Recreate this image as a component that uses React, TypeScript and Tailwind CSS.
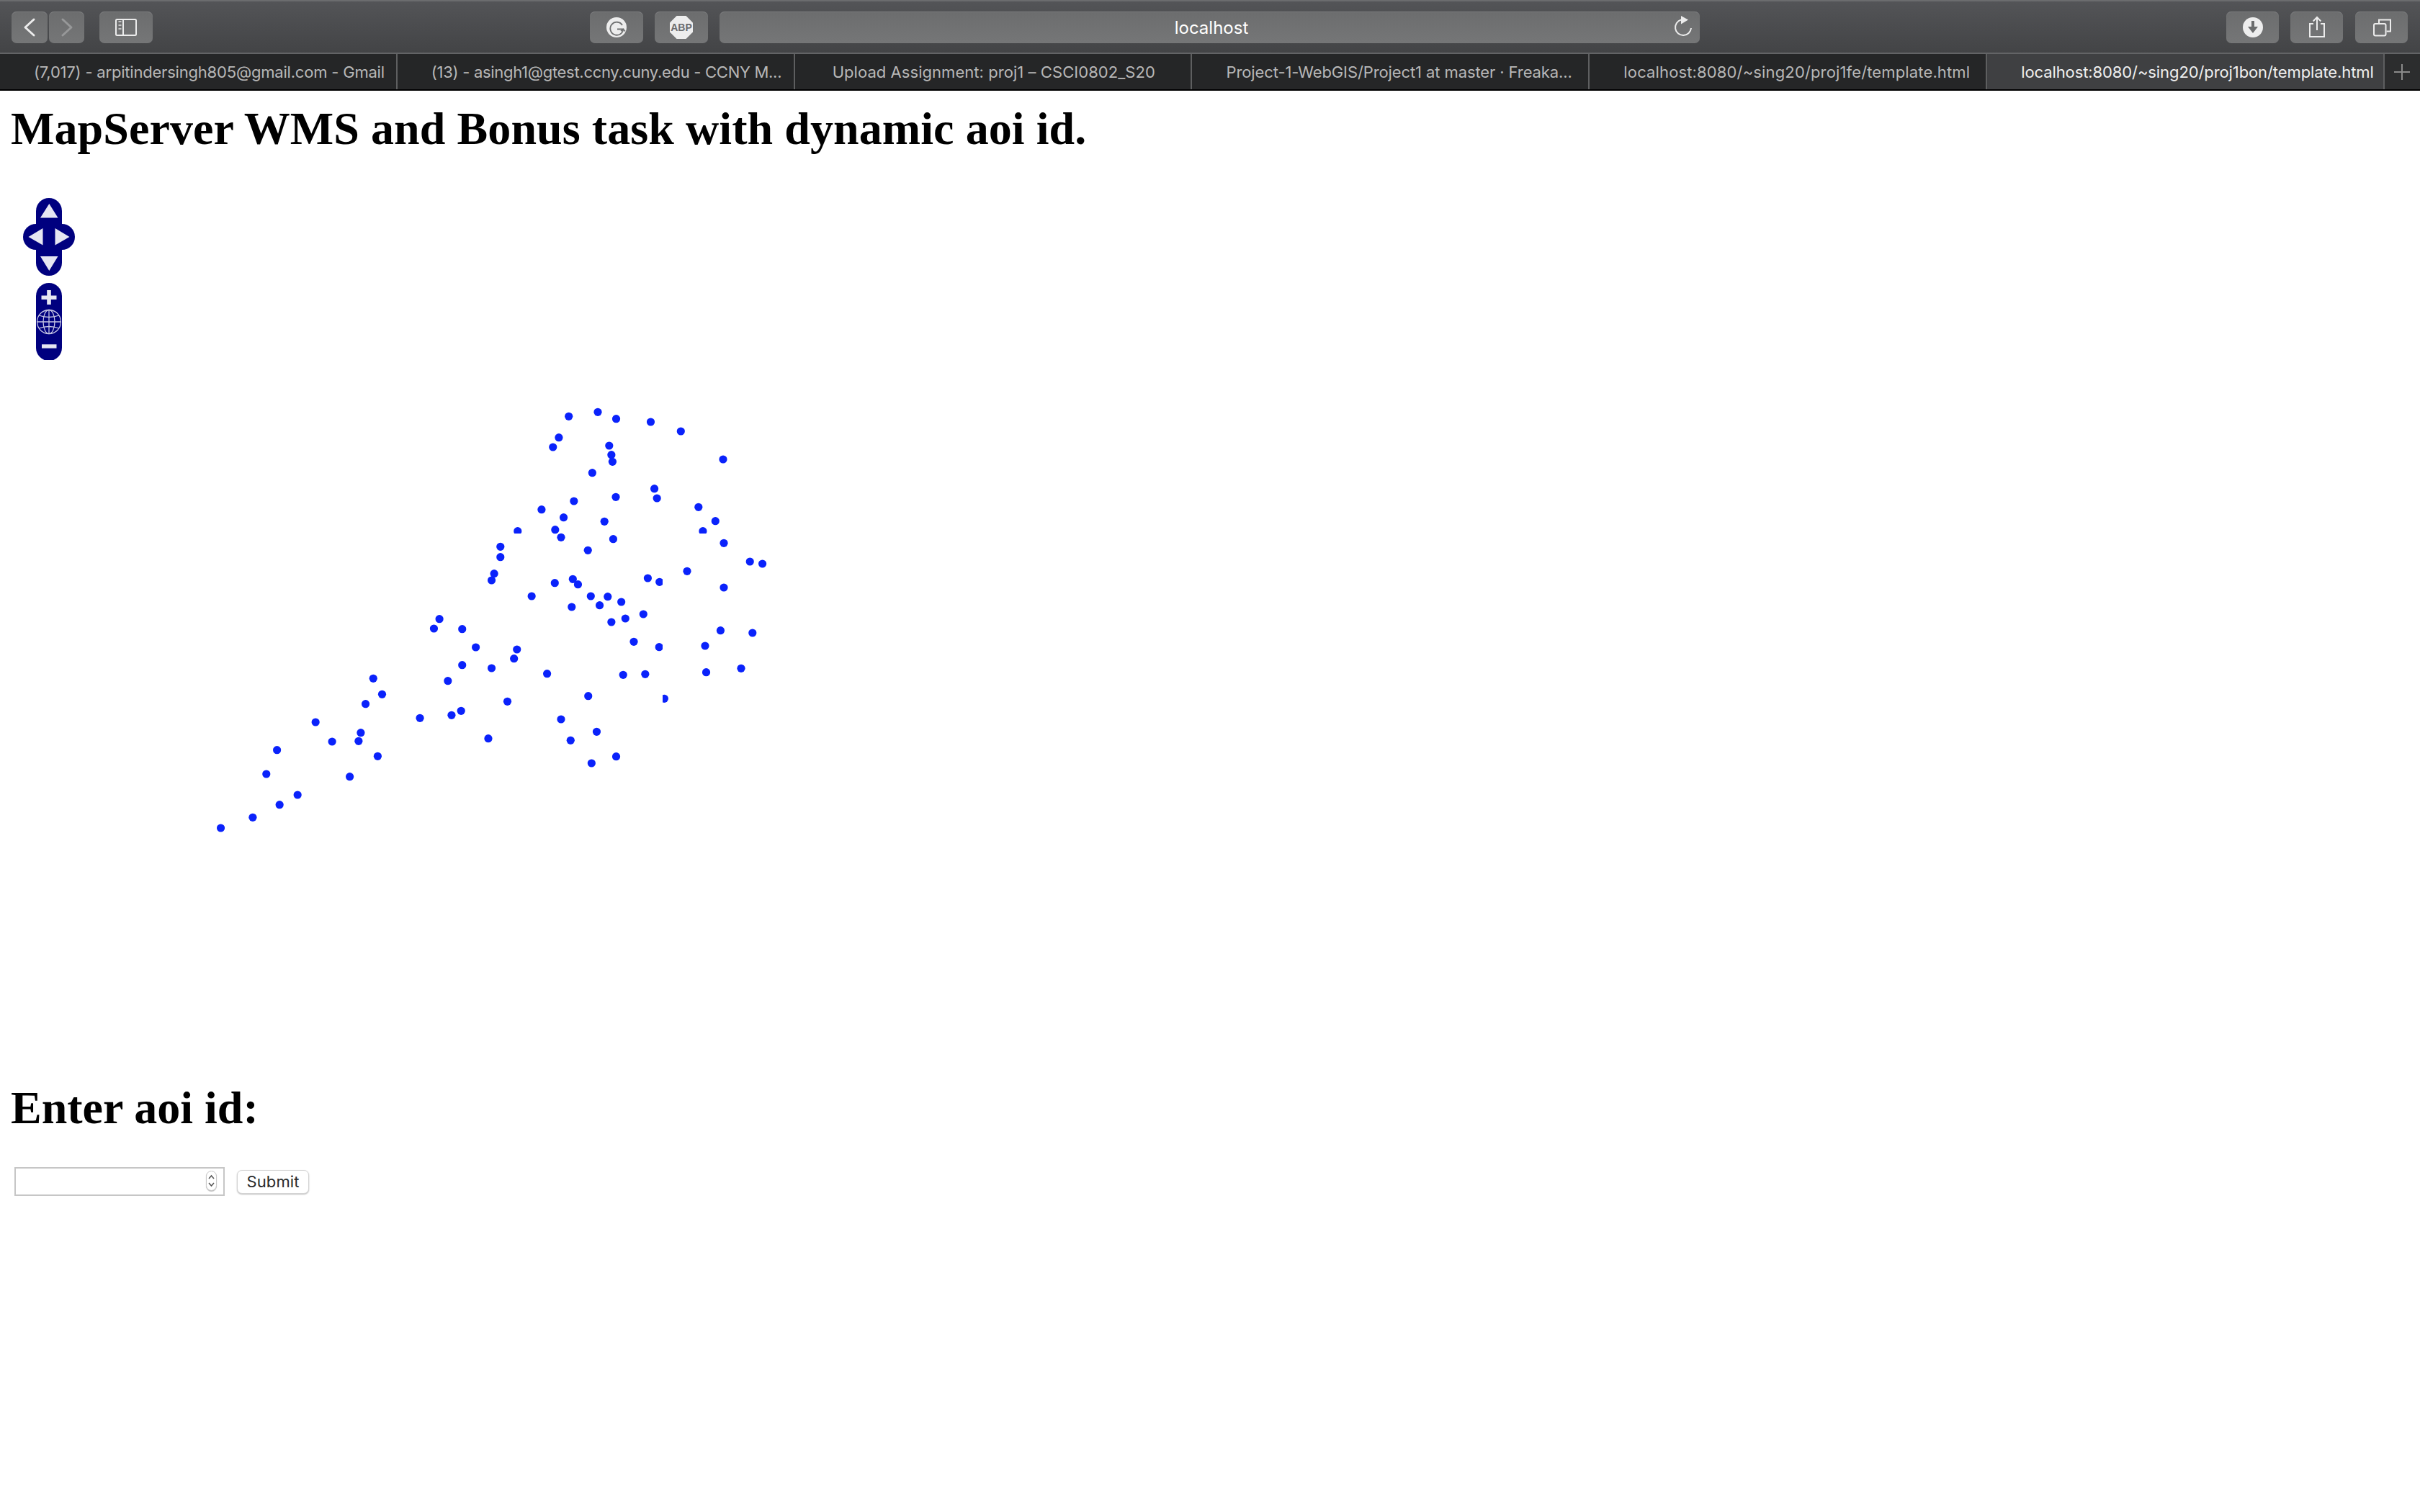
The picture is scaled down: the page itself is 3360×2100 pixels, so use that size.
import React from "react";

const zoomA: number[][] = [
  [999,85],[1078,67],[1128,95],[1222,108],[1304,147],[972,173],[956,213],[1109,207],[1115,245],[1118,274],[1419,264],[1063,320],
  [1232,386],[1127,421],[1239,426],[1013,438],[925,473],[1352,463],[985,506],[1096,523],[1398,521],[962,557],[978,589],[1120,596],
  [1421,613],[813,628],[813,671],[1051,643],[1492,690],[1526,699],[1321,730],[796,740],[789,768],[961,779],[1010,763],[1024,785],
  [1214,759],[1421,798],[898,834],[1059,834],[1105,836],[1142,858],[1007,879],[1083,872],[1202,909],[1153,927],[1115,942],[647,929],
];
const zoomB: number[][] = [
  [632,39],[709,41],[1412,47],[1499,57],[1176,94],[1370,111],[746,117],[858,126],[850,164],[709,191],[789,204],[940,227],
  [1147,232],[1207,229],[1373,221],[1468,205],[467,247],[670,257],[491,313],[1052,320],[446,353],[832,343],[706,382],[680,400],
  [594,412],[978,417],[310,429],[433,473],[1075,469],[355,510],[427,508],[1004,505],[780,497],[205,545],[479,571],[1128,572],
  [1061,600],[176,645],[403,656],[261,732],[212,773],[139,826],[52,870],
];
const MAP_Y = 250;
const ax = (x: number) => 280 + x / 1.96;
const ay = (y: number) => 550 + y / 3 - MAP_Y;
const by = (y: number) => 860 + y / 3 - MAP_Y;
const dots = [
  ...zoomA.map(([x, y]) => [ax(x), ay(y)]),
  ...zoomB.map(([x, y]) => [ax(x), by(y)]),
];
const DOT = "#0a22fb";
const R = 5.6;

function MapDots() {
  return (
    <svg width={1200} height={1251} className="block" viewBox="0 0 1200 1251">
      <defs>
        <clipPath id="tile-top"><rect x="0" y="0" width="1200" height={741 - MAP_Y} /></clipPath>
        <clipPath id="tile-left"><rect x="0" y="0" width="920" height="1251" /></clipPath>
        <clipPath id="tile-right"><rect x="920" y="0" width="280" height="1251" /></clipPath>
      </defs>
      {dots.map(([x, y], i) => (
        <circle key={i} cx={x} cy={y} r={R} fill={DOT} />
      ))}
      <circle cx={ax(860)} cy={ay(563)} r={R} fill={DOT} clipPath="url(#tile-top)" />
      <circle cx={ax(1364)} cy={ay(563)} r={R} fill={DOT} clipPath="url(#tile-top)" />
      <circle cx={ax(1246)} cy={ay(775)} r={R} fill={DOT} clipPath="url(#tile-left)" />
      <circle cx={ax(1245)} cy={by(116)} r={R} fill={DOT} clipPath="url(#tile-left)" />
      <circle cx={ax(1259)} cy={by(331)} r={R} fill={DOT} clipPath="url(#tile-right)" />
    </svg>
  );
}

function NavControl() {
  const navy = "#00007f";
  const ink = "#e6e6f2";
  return (
    <svg width={110} height={240} viewBox="0 260 110 240" className="absolute left-0 top-[10px]" style={{ filter: "blur(0.5px)" }}>
      <rect x="50" y="275" width="36" height="108" rx="18" fill={navy} />
      <rect x="32" y="311" width="72" height="36" rx="18" fill={navy} />
      <polygon points="68.3,283 56,302.5 80.5,302.5" fill={ink} />
      <polygon points="39.5,329 59.5,317 59.5,340.5" fill={ink} />
      <polygon points="96.5,329 76.5,317 76.5,340.5" fill={ink} />
      <polygon points="68.3,376 56,356 80.5,356" fill={ink} />
      <rect x="50" y="393" width="36" height="108" rx="18" fill={navy} />
      <rect x="57.5" y="410.5" width="21" height="5.5" fill={ink} />
      <rect x="65.2" y="403" width="5.6" height="20" fill={ink} />
      <g fill="none" stroke="#c6c6e4" strokeWidth="1.3">
        <circle cx="68" cy="447" r="16.5" />
        <ellipse cx="68" cy="447" rx="8" ry="16.5" />
        <path d="M68 430.5V463.5" />
        <path d="M51.5 447H84.5" />
        <path d="M54 438Q68 443 82 438" />
        <path d="M54 456Q68 451 82 456" />
      </g>
      <rect x="58" y="478.3" width="20.5" height="5.4" fill={ink} />
    </svg>
  );
}

function Btn({ w, className = "", children }: { w: string; className?: string; children?: React.ReactNode }) {
  return (
    <div className={`${w} ${className} h-[44px] shrink-0 rounded-[7px] bg-gradient-to-b from-[#6c6d6e] to-[#757677] shadow-[inset_0_1px_0_#7e7f80] flex items-center justify-center`}>
      {children}
    </div>
  );
}

function Tab({ text, active, cls }: { text: string; active?: boolean; cls: string }) {
  return (
    <div className={`min-w-0 h-[49px] flex items-center pt-[2px] ${cls} border-r-2 border-[#5e5f60] ${active ? "bg-[#3f4042] text-[#f0f0f0]" : "bg-[#252627] text-[#b8b8b8]"}`}>
      <span className="block whitespace-nowrap">{text}</span>
    </div>
  );
}

export default function App() {
  return (
    <div className="min-h-[2100px] bg-white font-['Liberation_Serif',serif] text-black">
      <div className="h-[75px] border-t-2 border-b-2 border-t-[#6b6c6e] border-b-[#636466] bg-gradient-to-b from-[#535457] to-[#434446] flex items-start pt-[14px] pl-[16px]">
        <Btn w="w-[50px]">
          <svg width="50" height="44" fill="none" stroke="#ececec" strokeWidth="3" strokeLinecap="round" strokeLinejoin="round"><path d="M31 11L19 22L31 33" /></svg>
        </Btn>
        <Btn w="w-[49px]" className="ml-[2px]">
          <svg width="49" height="44" fill="none" stroke="#979899" strokeWidth="3" strokeLinecap="round" strokeLinejoin="round"><path d="M19 11L31 22L19 33" /></svg>
        </Btn>
        <Btn w="w-[74px]" className="ml-[21px]">
          <svg width="74" height="44" fill="none" stroke="#ececec" strokeWidth="2">
            <rect x="23" y="11" width="28" height="22" rx="1.5" />
            <path d="M33 11V33" />
            <path d="M26.5 14H30.5M26.5 19H30.5M26.5 24H30.5" stroke="#c4c4c4" />
          </svg>
        </Btn>
        <Btn w="w-[74px]" className="ml-[607px]">
          <svg width="74" height="44">
            <circle cx="37" cy="22" r="14" fill="#ededed" />
            <path d="M45 19A9 9 0 1 0 46.3 24.5H38" fill="none" stroke="#6f7071" strokeWidth="1.8" />
            <path d="M43 27L46.5 24.5L49 27.5" fill="none" stroke="#6f7071" strokeWidth="1.6" />
          </svg>
        </Btn>
        <Btn w="w-[74px]" className="ml-[16px]">
          <svg width="74" height="44">
            <polygon points="30.5,6 43.5,6 53,15.5 53,28.5 43.5,38 30.5,38 21,28.5 21,15.5" fill="#ededed" />
            <text x="37" y="27" textAnchor="middle" fontFamily="Liberation Sans, sans-serif" fontWeight="700" fontSize="14" fill="#6b6c6d">ABP</text>
          </svg>
        </Btn>
        <Btn w="w-[1361px]" className="ml-[16px] relative text-white font-['Inter',sans-serif] text-[24px]">
          <span className="pl-[5px] pt-[2px]">localhost</span>
          <svg width="32" height="34" className="absolute right-[7px] top-[7px]" fill="none" stroke="#ececec" strokeWidth="2" overflow="visible">
            <path d="M13 4.5A11 11 0 1 0 27 16" />
            <polygon points="13,-1 23,4.5 13,10.5" fill="#ececec" stroke="none" />
          </svg>
        </Btn>
        <Btn w="w-[73px]" className="ml-[731px]">
          <svg width="73" height="44">
            <circle cx="37" cy="22" r="14" fill="#ededed" />
            <path d="M35 13H39V21H44L37 30L30 21H35Z" fill="#6b6c6d" />
          </svg>
        </Btn>
        <Btn w="w-[73px]" className="ml-[16px]">
          <svg width="73" height="44" fill="none" stroke="#ececec" strokeWidth="2">
            <path d="M32 17H27V35H47V17H42" />
            <path d="M37 8V26M31.7 13.5L37 8L42.3 13.5" />
          </svg>
        </Btn>
        <Btn w="w-[73px]" className="ml-[17px]">
          <svg width="73" height="44" fill="none" stroke="#ececec" strokeWidth="2">
            <rect x="26" y="17" width="16.5" height="16.5" rx="2" />
            <path d="M33 16.5V11.5H49V27.5H43.5" />
          </svg>
        </Btn>
      </div>
      <div className="h-[49px] grid grid-cols-[repeat(6,minmax(0,1fr))_49px] text-[22px] font-['Inter',sans-serif]">
        <Tab text="(7,017) - arpitindersingh805@gmail.com - Gmail" cls="pl-[47px] tracking-[-0.2px]" />
        <Tab text="(13) - asingh1@gtest.ccny.cuny.edu - CCNY M..." cls="pl-[47px] tracking-[-0.29px]" />
        <Tab text="Upload Assignment: proj1 – CSCI0802_S20" cls="pl-[52px] tracking-[0.05px]" />
        <Tab text="Project-1-WebGIS/Project1 at master · Freaka..." cls="pl-[47px] tracking-[-0.1px]" />
        <Tab text="localhost:8080/~sing20/proj1fe/template.html" cls="pl-[47px] tracking-[0.14px]" />
        <Tab text="localhost:8080/~sing20/proj1bon/template.html" cls="pl-[47px] tracking-[-0.1px]" active />
        <div className="h-[49px] bg-[#2c2d2e] flex items-center justify-center">
          <svg width="24" height="24" stroke="#8a8a8a" strokeWidth="2"><path d="M12 1V23M1 12H23" /></svg>
        </div>
      </div>
      <div className="h-[2px] bg-black" />
      <h1 className="ml-[15px] mt-[16px] text-[64px] font-bold leading-[74px] tracking-[0.08px]">MapServer WMS and Bonus task with dynamic aoi id.</h1>
      <div className="relative mt-[34px]">
        <NavControl />
        <MapDots />
      </div>
      <h1 className="ml-[15px] mt-[1px] text-[64px] font-bold leading-[74px]">Enter aoi id:</h1>
      <form className="flex items-center ml-[20px] mt-[45px]">
        <div className="relative w-[292px] h-[40px]">
          <input readOnly className="w-full h-full border-2 border-[#c6c6c6] bg-white outline-none" />
          <div className="absolute right-[11px] top-[5px] w-[15px] h-[28px] rounded-[8px] bg-white border border-[#c8c8c8] shadow-[0_1px_1px_#bbb]">
            <svg width="13" height="26" fill="none" stroke="#555" strokeWidth="1.5"><path d="M3 10L6.5 6L10 10M3 16L6.5 20L10 16" /></svg>
          </div>
        </div>
        <button type="button" className="ml-[17px] w-[100px] h-[33px] rounded-[7px] bg-white border border-[#d4d4d4] shadow-[0_1px_2px_#bbb] text-[#2a2a2a] text-[22px] leading-none tracking-[0.1px] font-['Inter',sans-serif]">Submit</button>
      </form>
    </div>
  );
}
